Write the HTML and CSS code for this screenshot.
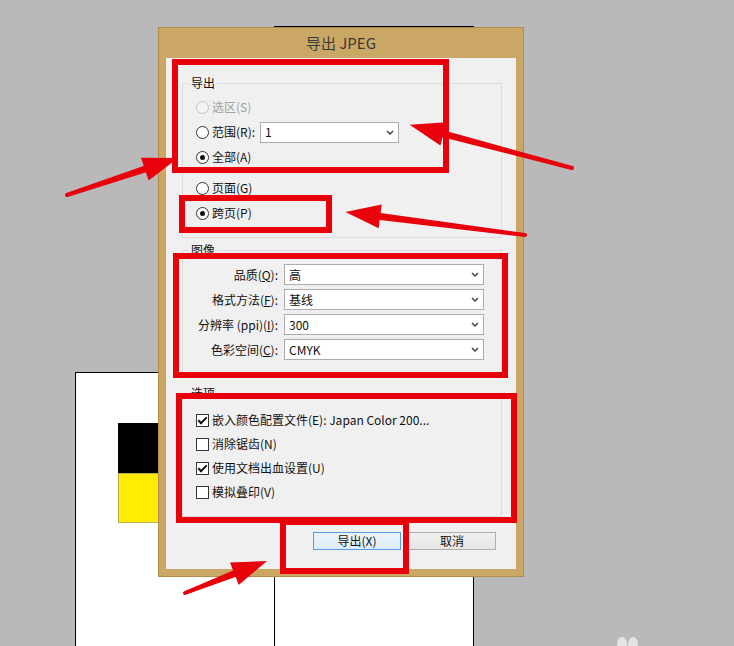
FILE: index.html
```html
<!DOCTYPE html>
<html lang="zh-CN">
<head>
  <meta charset="UTF-8">
  <meta name="viewport" content="width=device-width, initial-scale=1.0">
  <title>导出 JPEG</title>
  <link rel="stylesheet" href="styles.css">
</head>
<body>
  <div class="page page-left">
    <div class="swatch swatch-black"></div>
    <div class="swatch swatch-yellow"></div>
  </div>
  <div class="page page-right"></div>

  <div class="dialog">
    <div class="titlebar">导出 JPEG</div>
    <div class="client">
      <fieldset class="group">
        <legend>导出</legend>
        <div class="group-body">
          <label class="opt disabled"><input type="radio" class="radio" disabled>选区(S)</label>
          <div class="opt">
            <label class="opt-label"><input type="radio" class="radio" name="range">范围(R):</label>
            <div class="select select-range"><span>1</span><svg width="8" height="5" viewBox="0 0 8 5"><path d="M1 1l3 3 3-3" fill="none" stroke="#444" stroke-width="1.5"/></svg></div>
          </div>
          <label class="opt"><input type="radio" class="radio" name="range" checked>全部(A)</label>
          <label class="opt spaced"><input type="radio" class="radio" name="spread">页面(G)</label>
          <label class="opt"><input type="radio" class="radio" name="spread" checked>跨页(P)</label>
        </div>
      </fieldset>

      <fieldset class="group group-image">
        <legend>图像</legend>
        <div class="image-grid">
          <span class="field-label">品质(<u>Q</u>):</span>
          <div class="select"><span>高</span><svg width="8" height="5" viewBox="0 0 8 5"><path d="M1 1l3 3 3-3" fill="none" stroke="#444" stroke-width="1.5"/></svg></div>
          <span class="field-label">格式方法(<u>F</u>):</span>
          <div class="select"><span>基线</span><svg width="8" height="5" viewBox="0 0 8 5"><path d="M1 1l3 3 3-3" fill="none" stroke="#444" stroke-width="1.5"/></svg></div>
          <span class="field-label">分辨率 (ppi)(<u>I</u>):</span>
          <div class="select"><span>300</span><svg width="8" height="5" viewBox="0 0 8 5"><path d="M1 1l3 3 3-3" fill="none" stroke="#444" stroke-width="1.5"/></svg></div>
          <span class="field-label">色彩空间(<u>C</u>):</span>
          <div class="select"><span>CMYK</span><svg width="8" height="5" viewBox="0 0 8 5"><path d="M1 1l3 3 3-3" fill="none" stroke="#444" stroke-width="1.5"/></svg></div>
        </div>
      </fieldset>

      <fieldset class="group group-options">
        <legend>选项</legend>
        <div class="group-body">
          <label class="opt"><input type="checkbox" class="check" checked>嵌入颜色配置文件(E): Japan Color 200...</label>
          <label class="opt"><input type="checkbox" class="check">消除锯齿(N)</label>
          <label class="opt"><input type="checkbox" class="check" checked>使用文档出血设置(U)</label>
          <label class="opt"><input type="checkbox" class="check">模拟叠印(V)</label>
        </div>
      </fieldset>

      <div class="buttons">
        <button class="btn btn-default">导出(X)</button>
        <button class="btn">取消</button>
      </div>
    </div>
  </div>

  <div class="mark mark-export"></div>
  <div class="mark mark-spread"></div>
  <div class="mark mark-image"></div>
  <div class="mark mark-options"></div>
  <div class="mark mark-button"></div>

  <svg class="arrows" width="734" height="646" viewBox="0 0 734 646">
    <g fill="#e8000b">
      <g transform="translate(67 195) rotate(-18.4)">
        <circle r="2"/>
        <polygon points="0,-2 84,-3.5 84,3.5 0,2"/>
        <polygon points="82,-12 117,0 82,12"/>
      </g>
      <g transform="translate(572 168) rotate(194.9)">
        <circle r="2"/>
        <polygon points="0,-2 135,-3.5 135,3.5 0,2"/>
        <polygon points="133,-12 168,0 133,12"/>
      </g>
      <g transform="translate(525 235) rotate(187.3)">
        <circle r="2"/>
        <polygon points="0,-2 148,-3.5 148,3.5 0,2"/>
        <polygon points="146,-12 181,0 146,12"/>
      </g>
      <g transform="translate(185 593) rotate(-21.3)">
        <circle r="2"/>
        <polygon points="0,-2 55,-3.5 55,3.5 0,2"/>
        <polygon points="53,-12 88,0 53,12"/>
      </g>
    </g>
    <g fill="#e4e4e4">
      <ellipse cx="622" cy="644" rx="5" ry="7"/>
      <ellipse cx="633" cy="644" rx="5" ry="7"/>
    </g>
  </svg>
</body>
</html>
```

FILE: styles.css
```css
html, body {
  margin: 0;
  height: 100%;
  overflow: hidden;
}
body {
  position: relative;
  background: #b9b9b9;
  font-family: "Noto Sans CJK SC", sans-serif;
  font-size: 12px;
  color: #111;
}

/* document pages behind the dialog */
.page {
  position: absolute;
  background: #fff;
  border: 1px solid #000;
  border-bottom: none;
}
.page-left {
  left: 75px;
  top: 372px;
  width: 199px;
  height: 273px;
}
.page-right {
  left: 274px;
  top: 26px;
  width: 198px;
  height: 619px;
}
.swatch {
  position: absolute;
  left: 42px;
  width: 80px;
  box-sizing: border-box;
}
.swatch-black {
  top: 50px;
  height: 50px;
  background: #000;
}
.swatch-yellow {
  top: 100px;
  height: 50px;
  background: #ffec00;
  border: 1px solid #b9b04a;
}

/* dialog */
.dialog {
  position: absolute;
  left: 158px;
  top: 27px;
  width: 366px;
  height: 550px;
  box-sizing: border-box;
  padding: 0 7px 7px;
  background: #cba765;
  border: 1px solid #b08c4f;
  display: flex;
  flex-direction: column;
}
.titlebar {
  height: 30px;
  line-height: 30px;
  text-align: center;
  font-size: 15px;
  color: #3a3a3a;
}
.client {
  flex: 1;
  background: #f0f0f0;
  display: flex;
  flex-direction: column;
  padding-top: 17px;
  line-height: 16px;
}
.group {
  margin: 0 14px 0 16px;
  padding: 0;
  border: 1px solid #dcdcdc;
  min-width: 0;
}
.group legend {
  margin-left: 6px;
  padding: 0 2px;
  line-height: 16px;
}
.group-body {
  display: flex;
  flex-direction: column;
  gap: 1px;
  padding: 4px 13px 12px;
}
.group-image {
  margin-top: 4px;
}
.group-options {
  margin-top: 8px;
}
.group-options .group-body {
  gap: 0;
  padding-top: 7px;
}
.opt {
  display: flex;
  align-items: center;
  height: 24px;
  white-space: nowrap;
}
.opt-label {
  display: flex;
  align-items: center;
}
.opt.spaced {
  margin-top: 6px;
}
.opt.disabled {
  color: #a2a2a2;
}

.radio, .check {
  appearance: none;
  width: 13px;
  height: 13px;
  margin: 0 3px 0 0;
  border: 1px solid #333;
  background: #fff;
  box-sizing: border-box;
  display: grid;
  place-content: center;
}
.radio {
  border-radius: 50%;
}
.radio:checked::before {
  content: "";
  width: 5px;
  height: 5px;
  border-radius: 50%;
  background: #111;
}
.radio:disabled {
  border-color: #c2c2c2;
  background: #f3f3f3;
}
.check:checked::before {
  content: "";
  width: 3px;
  height: 7px;
  margin-top: -2px;
  border: solid #111;
  border-width: 0 2px 2px 0;
  transform: rotate(45deg);
}

.select {
  height: 21px;
  box-sizing: border-box;
  background: #fff;
  border: 1px solid #acacac;
  display: flex;
  align-items: center;
  justify-content: space-between;
  padding: 0 4px;
}
.select-range {
  width: 139px;
  margin-left: 5px;
}

.image-grid {
  display: grid;
  grid-template-columns: 95px 200px;
  column-gap: 6px;
  row-gap: 4px;
  padding: 6px 0 16px;
}
.field-label {
  text-align: right;
  white-space: nowrap;
  line-height: 21px;
}

.buttons {
  display: flex;
  justify-content: flex-end;
  gap: 7px;
  margin-top: 15px;
  padding-right: 20px;
}
.btn {
  width: 88px;
  height: 18px;
  padding: 0;
  font: inherit;
  line-height: 16px;
  color: #111;
  border: 1px solid #adadad;
  background: linear-gradient(#f0f0f0, #e5e5e5);
}
.btn-default {
  border-color: #569de5;
  background: linear-gradient(#ecf4fc, #dcecfc);
}

/* red annotation frames and arrows */
.mark {
  position: absolute;
  box-sizing: border-box;
  border: 6px solid #e8000b;
}
.mark-export {
  left: 172px;
  top: 59px;
  width: 277px;
  height: 114px;
}
.mark-spread {
  left: 179px;
  top: 195px;
  width: 153px;
  height: 38px;
}
.mark-image {
  left: 173px;
  top: 253px;
  width: 335px;
  height: 125px;
}
.mark-options {
  left: 176px;
  top: 393px;
  width: 341px;
  height: 130px;
}
.mark-button {
  left: 280px;
  top: 519px;
  width: 129px;
  height: 55px;
}
.arrows {
  position: absolute;
  left: 0;
  top: 0;
  pointer-events: none;
}
```
